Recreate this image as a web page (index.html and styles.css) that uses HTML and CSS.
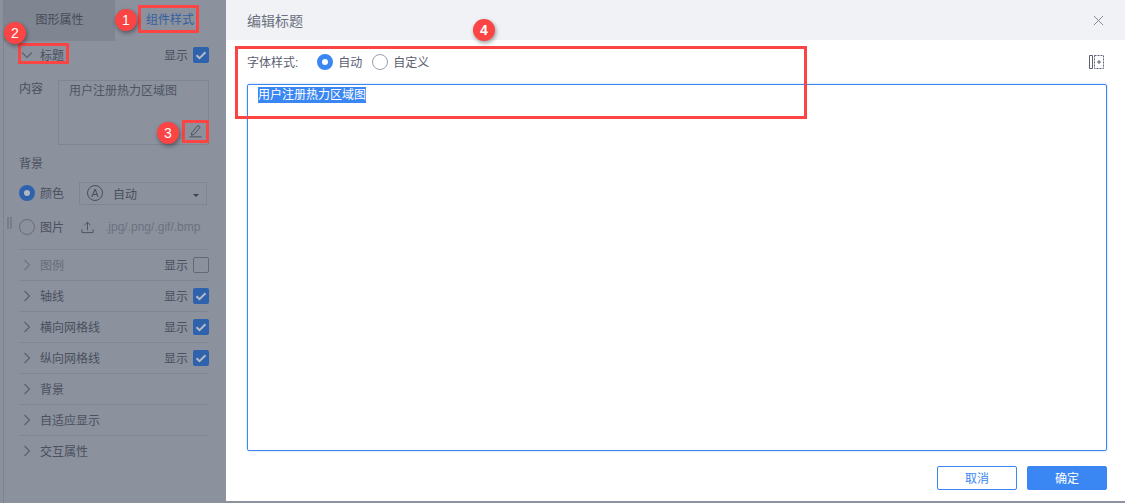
FILE: index.html
```html
<!DOCTYPE html>
<html lang="zh">
<head>
<meta charset="utf-8">
<title>编辑标题</title>
<link rel="stylesheet" href="styles.css">
</head>
<body>
<div class="stage">
  <aside class="side">
    <div class="tabs">
      <div class="tab tab-off">图形属性</div>
      <div class="tab tab-on">组件样式</div>
    </div>
    <div class="panel">
      <div class="row row-title">
        <svg class="chev" viewBox="0 0 12 12"><path d="M1 3.5l5 5 5-5"/></svg>
        <span class="name">标题</span>
        <span class="show">显示</span>
        <span class="check on"><svg viewBox="0 0 16 16"><path d="M3.5 8.2l3 3 6-6"/></svg></span>
      </div>
      <div class="content">
        <span class="label">内容</span>
        <div class="textbox">
          <span>用户注册热力区域图</span>
          <svg class="pen" viewBox="0 0 16 16"><path d="M4 10.5L10.5 2.5l2.4 2L6.3 12.3l-2.6.6zM1.5 14.8h13"/></svg>
        </div>
      </div>
      <div class="bg-title">背景</div>
      <div class="bg-row">
        <span class="radio radio-on-dark"></span>
        <span class="opt">颜色</span>
        <div class="select">
          <span class="circle-a">A</span>
          <span class="sel-text">自动</span>
          <span class="caret"></span>
        </div>
      </div>
      <div class="bg-row bg-row2">
        <span class="grip"></span>
        <span class="radio"></span>
        <span class="opt">图片</span>
        <svg class="upload" viewBox="0 0 14 14"><path d="M7 10V1.5M3.8 4.5L7 1.3l3.2 3.2M1 9v3.5h12V9"/></svg>
        <span class="ext">.jpg/.png/.gif/.bmp</span>
      </div>
      <div class="list">
        <div class="row item dim">
          <svg class="chev" viewBox="0 0 12 12"><path d="M3.5 1l5 5-5 5"/></svg>
          <span class="name">图例</span><span class="show">显示</span><span class="check"></span>
        </div>
        <div class="row item">
          <svg class="chev" viewBox="0 0 12 12"><path d="M3.5 1l5 5-5 5"/></svg>
          <span class="name">轴线</span><span class="show">显示</span>
          <span class="check on"><svg viewBox="0 0 16 16"><path d="M3.5 8.2l3 3 6-6"/></svg></span>
        </div>
        <div class="row item">
          <svg class="chev" viewBox="0 0 12 12"><path d="M3.5 1l5 5-5 5"/></svg>
          <span class="name">横向网格线</span><span class="show">显示</span>
          <span class="check on"><svg viewBox="0 0 16 16"><path d="M3.5 8.2l3 3 6-6"/></svg></span>
        </div>
        <div class="row item">
          <svg class="chev" viewBox="0 0 12 12"><path d="M3.5 1l5 5-5 5"/></svg>
          <span class="name">纵向网格线</span><span class="show">显示</span>
          <span class="check on"><svg viewBox="0 0 16 16"><path d="M3.5 8.2l3 3 6-6"/></svg></span>
        </div>
        <div class="row item">
          <svg class="chev" viewBox="0 0 12 12"><path d="M3.5 1l5 5-5 5"/></svg>
          <span class="name">背景</span>
        </div>
        <div class="row item">
          <svg class="chev" viewBox="0 0 12 12"><path d="M3.5 1l5 5-5 5"/></svg>
          <span class="name">自适应显示</span>
        </div>
        <div class="row item">
          <svg class="chev" viewBox="0 0 12 12"><path d="M3.5 1l5 5-5 5"/></svg>
          <span class="name">交互属性</span>
        </div>
      </div>
    </div>
  </aside>
  <main class="dialog">
    <header class="head">
      <span class="head-title">编辑标题</span>
      <svg class="close" viewBox="0 0 12 12"><path d="M1 1l10 10M11 1L1 11"/></svg>
    </header>
    <div class="body">
      <div class="style-row">
        <span class="style-label">字体样式:</span>
        <span class="radio radio-on"></span><span class="r-text">自动</span>
        <span class="radio radio-off"></span><span class="r-text">自定义</span>
        <svg class="insert" viewBox="0 0 15 14"><path class="solid" d="M.5 .5h3v13h-3z"/><path class="dash" d="M5.5 .5h9v13h-9z"/><path class="solid" d="M10 5v4M8 7h4"/></svg>
      </div>
      <div class="editor"><span class="selected">用户注册热力区域图</span></div>
      <div class="foot">
        <button class="btn btn-ghost"><span class="btn-text">取消</span></button>
        <button class="btn btn-main"><span class="btn-text">确定</span></button>
      </div>
    </div>
  </main>
  <div class="mark mark1"></div>
  <div class="mark mark2"></div>
  <div class="mark mark3"></div>
  <div class="mark mark4"></div>
  <div class="badge b1">1</div>
  <div class="badge b2">2</div>
  <div class="badge b3">3</div>
  <div class="badge b4">4</div>
</div>
</body>
</html>
```
FILE: styles.css
```css
* { box-sizing: border-box; }
html, body { margin: 0; padding: 0; }
body { font-family: "Liberation Sans", "Noto Sans CJK SC", sans-serif; font-size: 12px; color: #4a505e; background: #8b919d; overflow: hidden; }
.stage { position: relative; width: 1125px; height: 503px; display: flex; background: #8b919d; }

.side { width: 226px; flex: none; height: 503px; padding-left: 4px; background: linear-gradient(90deg, #8b919d 3px, #7d838f 3px, #7d838f 4px, #8b919d 4px); }
.tabs { display: flex; height: 41px; }
.tab { line-height: 41px; text-align: center; }
.tab-off { width: 111px; background: #7f8591; color: #474c59; }
.tab-on { width: 110px; color: #33609f; }
.panel { padding: 0 15px; width: 220px; }
.row { display: flex; align-items: center; }
.row-title { height: 28px; }
.chev { width: 12px; height: 12px; margin-left: 2px; margin-right: 7px; fill: none; stroke: #5a6070; stroke-width: 1.1; flex: none; }
.name { flex: 1; color: #4a505e; margin-bottom: 2px; }
.show { margin-right: 5px; color: #4a505e; margin-bottom: 2px; }
.check { width: 16px; height: 16px; border: 1px solid #636976; border-radius: 2px; display: block; flex: none; }
.check svg { display: block; width: 16px; height: 16px; fill: none; stroke: #b5bbc6; stroke-width: 2; }
.check.on { background: #2f62ad; border: 0; }

.content { display: flex; margin-top: 11px; }
.label { width: 39px; flex: none; line-height: 18px; }
.textbox { position: relative; width: 151px; height: 65px; border: 1px solid #7f8591; padding: 1px 10px 0; line-height: 18px; color: #4f5563; }
.pen { position: absolute; right: 5px; bottom: 6px; width: 15px; height: 15px; fill: none; stroke: #474c59; stroke-width: 1; }
.bg-title { margin-top: 10px; line-height: 18px; }
.bg-row { display: flex; align-items: center; height: 24px; margin-top: 8px; position: relative; }
.bg-row2 { margin-top: 10px; }
.radio { width: 16px; height: 16px; border-radius: 50%; border: 1px solid #666c79; flex: none; display: block; }
.radio-on-dark { border: 5px solid #2f62ad; background: #b1b6c0; }
.opt { margin-left: 5px; width: 24px; flex: none; margin-bottom: 1px; }
.select { margin-left: 15px; width: 128px; height: 23px; border: 1px solid #7f8591; display: flex; align-items: center; padding-left: 7px; position: relative; }
.circle-a { width: 16px; height: 16px; border: 1px solid #4a505e; border-radius: 50%; font-size: 11px; line-height: 14px; text-align: center; flex: none; }
.sel-text { margin-left: 10px; }
.caret { position: absolute; right: 7px; top: 11px; border: 3px solid transparent; border-top-color: #3c414e; }
.grip { position: absolute; left: -12px; top: 2px; width: 5px; height: 12px; background-image: radial-gradient(circle at 1px 1px, #5f6572 .6px, transparent .8px); background-size: 3px 2px; }
.upload { width: 13px; height: 13px; margin-left: 17px; fill: none; stroke: #4a505e; stroke-width: 1; flex: none; }
.ext { margin-left: 11px; color: #6c7280; white-space: nowrap; margin-bottom: 1px; }
.list { margin-top: 10px; }
.item { height: 31px; border-top: 1px solid #7f8591; }
.item.dim .name { color: #686e7b; }
.item.dim .chev { stroke: #707683; }

.dialog { flex: 1; height: 501px; background: #fff; display: flex; flex-direction: column; }
.head { height: 40px; background: #f0f2f6; display: flex; align-items: center; justify-content: space-between; padding: 0 21px; flex: none; }
.head-title { font-size: 14px; color: #6a707d; }
.close { width: 11px; height: 11px; fill: none; stroke: #7a8090; stroke-width: 1; }
.body { flex: 1; padding: 0 18px 0 21px; display: flex; flex-direction: column; }
.style-row { display: flex; align-items: center; height: 44px; color: #5a6070; flex: none; }
.style-label { margin-right: 19px; margin-bottom: 1px; }
.style-row .radio { margin-right: 5px; }
.radio-on { border: 5px solid #3a86f3; background: #fff; }
.style-row .radio-off { border: 1px solid #9aa0ac; margin-left: 10px; }
.r-text { min-width: 24px; margin-bottom: 1px; }
.insert { width: 15px; height: 14px; margin-left: auto; margin-right: 3px; fill: none; }
.insert .solid { stroke: #5a6070; stroke-width: 1; }
.insert .dash { stroke: #5a6070; stroke-width: 1; stroke-dasharray: 2 1; }
.editor { height: 367px; border: 1px solid #3a86f3; border-radius: 2px; padding: 2px 10px; line-height: 16px; color: #fff; flex: none; box-shadow: 0 0 2px rgba(58,134,243,.5); }
.selected { background: #3a86f3; display: inline-block; line-height: 16px; }
.foot { display: flex; justify-content: flex-end; gap: 10px; margin-top: 15px; }
.btn { width: 80px; height: 24px; border-radius: 2px; font: inherit; padding: 0 0 2px; }
.btn-ghost { background: #fff; border: 1px solid #3a86f3; color: #3a86f3; }
.btn-main { background: #3a86f3; border: 1px solid #3a86f3; color: #fff; }

.mark { position: absolute; border: 3px solid #fb4444; }
.mark1 { left: 138px; top: 5px; width: 61px; height: 28px; }
.mark2 { left: 18px; top: 43px; width: 51px; height: 21px; }
.mark3 { left: 182px; top: 120px; width: 27px; height: 23px; }
.mark4 { left: 235px; top: 46px; width: 572px; height: 73px; }
.badge { position: absolute; width: 22px; height: 22px; border-radius: 50%; background: #fb4444; color: #fff; font-size: 14px; line-height: 22px; text-align: center; box-shadow: 1px 2px 4px rgba(0,0,0,.4); }
.b1 { left: 115px; top: 9px; }
.b2 { left: 4px; top: 22px; }
.b3 { left: 157px; top: 122px; }
.b4 { left: 473px; top: 19px; font-weight: 700; }
```
